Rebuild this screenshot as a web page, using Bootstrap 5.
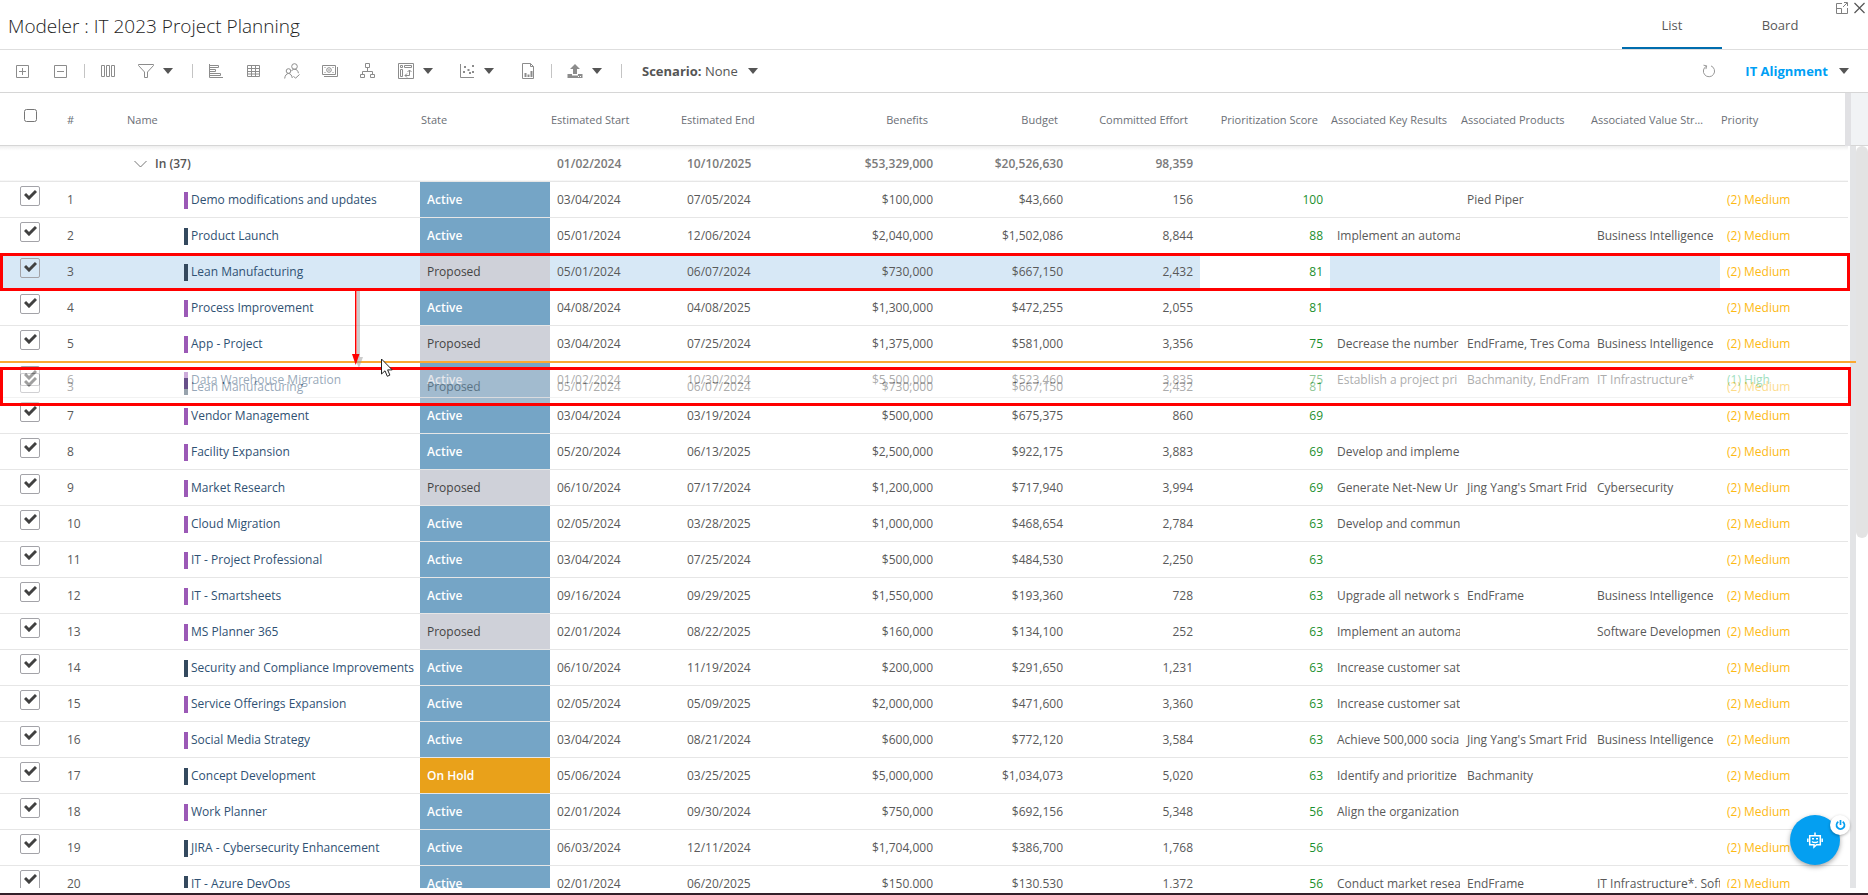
<!DOCTYPE html>
<html lang="en">
<head>
<meta charset="utf-8">
<meta name="viewport" content="width=device-width, initial-scale=1">
<title>Modeler : IT 2023 Project Planning</title>
<link href="https://cdn.jsdelivr.net/npm/bootstrap@5.3.0/dist/css/bootstrap.min.css" rel="stylesheet">
<style>
  body { font-family: "Open Sans", "Noto Sans", sans-serif; font-size: 12px; line-height: 18px; color: #595959; background: #fff; }
  button { border: 0; background: none; padding: 0; color: inherit; }
  svg { display: block; }

  .titlebar { height: 50px; border-bottom: 1px solid #dedede; }
  .page-title { font-size: 19px; line-height: 24px; font-weight: 300; color: #222; padding: 14px 0 0 8px; }
  .view-tabs { --bs-nav-link-color: #595959; --bs-nav-link-hover-color: #222; gap: 16px; padding-right: 46px; }
  .view-tabs .nav-link { width: 100px; padding: 16px 0 13px; text-align: center; font-size: 13px; border-bottom: 2px solid transparent; }
  .view-tabs .nav-link + .nav-link { width: 84px; }
  .view-tabs .nav-link.active { border-bottom-color: #006dae; }
  .window-buttons { top: 2px; right: 3px; gap: 6px; }

  .toolbar { height: 43px; border-bottom: 1px solid #d6d6d6; padding: 0 19px 0 15px; gap: 15px; color: #8c8c8c; }
  .tool-group { display: flex; align-items: center; gap: 22px; }
  .tool-menu { display: flex; align-items: center; gap: 9px; padding-right: 4px; }
  .caret { width: 10px; height: 6px; border: 5px solid transparent; border-top: 6px solid #555; border-bottom: 0; }
  .divider { width: 1px; height: 14px; background: #c4c4c4; }
  .scenario { font-size: 13px; color: #555; padding-left: 5px; gap: 10px; }
  .alignment { font-size: 13px; color: #009ff5; font-weight: 700; padding: 0; gap: 11px; margin-left: 14px; }

  .sheet-table { table-layout: fixed; --bs-table-bg: transparent; --bs-table-color: #595959; margin: 0; }
  .sheet-table > :not(caption) > * > * { padding: 2px 0 0 7px; border-color: #e6e6e6; box-shadow: none; overflow: hidden; white-space: nowrap; height: 36px; vertical-align: middle; }
  .sheet-table > thead > tr > th { height: 52px; padding: 2px 12px 0 1px; font-size: 11px; font-weight: 400; color: #6b6f76; border-color: #d6d6d6; text-overflow: ellipsis; }
  .sheet-table > thead > tr > th:last-child { border-right: 5px solid #e1e1e4; }
  .sheet-table > thead > tr > .num { text-align: right; }
  .sheet-table > thead > tr > .check { padding: 0 0 6px 24px; text-overflow: clip; }
  .sheet-table > thead > tr > .seq { padding-left: 7px; }
  .sheet-table > thead > tr > .name { padding-left: 7px; }
  .sheet-table > tbody > tr > .check { padding: 0 0 6px 20px; }
  .sheet-table > tbody > tr > .name { padding-left: 64px; }
  .sheet-table > tbody > tr > .num { text-align: right; padding-right: 7px; }
  .sheet-table > tbody > .group-row > td { font-weight: 600; color: #7a7a7a; background: linear-gradient(#ececec, #fff 5px); }
  .sheet-table > tbody > .group-row > .group-name { padding-left: 14px; color: #555; }
  .sheet-table > tbody > tr > .score { color: #1c8f2e; }
  .sheet-table > tbody > tr > .medium { color: #fdb913; }
  .sheet-table > tbody > tr > .high { color: #3dbd7c; }
  .sheet-table > tbody > .picked > td { background: #d7e8f6; }
  .sheet-table > tbody > .picked > .score, .sheet-table > tbody > .picked > .medium { background: #fff; }
  .sheet-table > tbody > tr > .st-active { background: #75a5c6; color: #fff; font-weight: 600; }
  .sheet-table > tbody > tr > .st-proposed { background: #cfd1d9; color: #444; }
  .sheet-table > tbody > tr > .st-onhold { background: #e9a11a; color: #fff; font-weight: 600; }
  .name a { color: #2f5173; text-decoration: none; display: flex; align-items: center; gap: 3px; }
  .name a::before { content: ""; flex: none; width: 4px; height: 17px; background: #9b59b6; }
  .name .dark::before { background: #34495e; }

  .row-check { appearance: none; display: block; width: 20px; height: 20px; margin: 0; border: 1px solid #a3a3a8; border-radius: 2px; background: no-repeat 3px 2px/13px 11px url("data:image/svg+xml,%3Csvg xmlns='http://www.w3.org/2000/svg' viewBox='0 0 13 11'%3E%3Cpath d='M1 5l4 4L12 2' fill='none' stroke='%23414141' stroke-width='3'/%3E%3C/svg%3E"); }
  .all-check { display: block; width: 13px; height: 13px; margin: 0; }

  .side { width: 18px; }
  .side-head { height: 53px; background: #f1f3f5; border-left: 1px solid #e1e1e4; border-bottom: 1px solid #d6d6d6; }
  .side-edge { width: 6px; background: #e3e4e6; }
  .side-thumb { width: 12px; height: 392px; border-radius: 6px; background: #e3e3e3; }

  .drag-row { top: 275px; left: 0; right: 18px; opacity: .5; background: #fff; }
  .drop-line { top: 268px; left: 0; right: 12px; height: 2px; background: #fba831; }
  .frame { left: 0; right: 18px; border: 3px solid #f00; }
  .frame-from { top: 160px; height: 38px; }
  .frame-to { top: 274px; right: 17px; height: 39px; }
  .arrow { top: 198px; left: 346px; }
  .pointer { top: 265px; left: 380px; }
  .chat { right: 28px; bottom: 30px; }
  .chat-button { width: 50px; height: 50px; border-radius: 50%; background: #049ff1; color: #fff; box-shadow: 0 2px 5px rgba(0,0,0,.35); }
  .chat-power { top: 0; right: -10px; width: 20px; height: 20px; border-radius: 50%; background: #fff; color: #049ff1; box-shadow: 0 1px 3px rgba(0,0,0,.3); }
  .page-foot { height: 7px; border-bottom: 2px solid #33202a; }
</style>
</head>
<body class="vh-100 d-flex flex-column overflow-hidden">

<header class="titlebar flex-shrink-0 d-flex justify-content-between position-relative">
  <h1 class="page-title m-0">Modeler : IT 2023 Project Planning</h1>
  <nav class="nav view-tabs">
    <a class="nav-link active" href="#list">List</a>
    <a class="nav-link" href="#board">Board</a>
  </nav>
  <div class="window-buttons position-absolute d-flex">
    <button type="button" aria-label="Expand"><svg width="12" height="12" viewBox="0 0 12 12" fill="none" stroke="#808080"><path d="M6 1.500H.5v10h11V6M.5 6.500h5v5M7 5l4-4M8 .5h3.500V4"/></svg></button>
    <button type="button" aria-label="Close"><svg width="11" height="12" viewBox="0 0 11 12" fill="none" stroke="#555" stroke-width="1.200"><path d="M.5 1l10 10M10.500 1l-10 10"/></svg></button>
  </div>
</header>

<div class="toolbar flex-shrink-0 d-flex align-items-center">
  <div class="tool-group">
    <button type="button" aria-label="Expand all"><svg width="16" height="16" viewBox="0 0 16 16" fill="none" stroke="currentColor"><path d="M1.500 2.500h12v12h-12zM4 8.500h7M7.500 5v7"/></svg></button>
    <button type="button" aria-label="Collapse all"><svg width="16" height="16" viewBox="0 0 16 16" fill="none" stroke="currentColor"><path d="M1.500 2.500h12v12h-12zM4 8.500h7"/></svg></button>
  </div>
  <span class="divider"></span>
  <div class="tool-group">
    <button type="button" aria-label="Columns"><svg width="16" height="16" viewBox="0 0 16 16" fill="none" stroke="currentColor"><path d="M1.500 2.500h3v11h-3zM6.500 2.500h3v11h-3zM11.500 2.500h3v11h-3z"/></svg></button>
    <button type="button" class="tool-menu" aria-label="Filter"><svg width="16" height="16" viewBox="0 0 16 16" fill="none" stroke="currentColor"><path d="M.5 1.500h15v1L9.500 9v5.500h-3V9L.5 2.500z"/></svg><span class="caret"></span></button>
  </div>
  <span class="divider"></span>
  <div class="tool-group">
    <button type="button" aria-label="Gantt"><svg width="16" height="16" viewBox="0 0 16 16" fill="none" stroke="currentColor"><path d="M1.500 1v13.500H15M1.500 2.500h9v2h-9M1.500 6.500h6v2h-6M1.500 10.500h11v2h-11"/></svg></button>
    <button type="button" aria-label="Table"><svg width="16" height="16" viewBox="0 0 16 16" fill="none" stroke="currentColor"><path d="M1.500 2.500h12v11h-12zM1.500 5.500h12M1.500 8.500h12M1.500 11h12M5.500 2.500v11M9.500 2.500v11"/></svg></button>
    <button type="button" aria-label="Resources"><svg width="16" height="16" viewBox="0 0 16 16" fill="none" stroke="currentColor"><circle cx="10.500" cy="3.500" r="2.800"/><circle cx="4.500" cy="8" r="2.300"/><path d="M.7 15.500c.3-3 1.800-5 3.800-5s3.300 1.800 3.800 4.500M7.500 8c.7-1.200 1.700-1.800 3-1.800 2.300 0 3.600 1.700 3.900 4M9.500 13.200l2 2 4-3.700"/></svg></button>
    <button type="button" aria-label="Finances"><svg width="16" height="16" viewBox="0 0 16 16" fill="none" stroke="currentColor"><path d="M.5 2.500h13v9H.5zM15.500 4v9.500H2M2.500 4.500h1M10.500 4.500h1M2.500 9.500h1M10.500 9.500h1"/><circle cx="7" cy="7" r="2.300"/><path d="M7 6v2"/></svg></button>
    <button type="button" aria-label="Hierarchy"><svg width="16" height="16" viewBox="0 0 16 16" fill="none" stroke="currentColor"><path d="M5.500.5h4v4h-4zM.5 11.500h4v3h-4zM10.500 11.500h4v3h-4zM7.500 4.500v4M2.500 11.500v-3h10v3"/></svg></button>
    <button type="button" class="tool-menu" aria-label="Pivot"><svg width="16" height="16" viewBox="0 0 16 16" fill="none" stroke="currentColor"><path d="M.5.500h15v15H.5zM2.500 2.500h2v2h-2zM6.500 2.500h7v2h-7zM2.500 6.500h2v7h-2zM7 12.500h4.500V7M9 10.500l-2 2 2 2M9.500 9l2-2 2 2"/></svg><span class="caret"></span></button>
    <button type="button" class="tool-menu" aria-label="Bubble chart"><svg width="16" height="16" viewBox="0 0 16 16" fill="none" stroke="currentColor"><path d="M1.500 1v13.500H15"/><path d="M4 9h2M5 4h2M8.500 7h2M10 10h2M13 3h2M13 9h2" stroke-width="2"/></svg><span class="caret"></span></button>
    <button type="button" aria-label="Report"><svg width="16" height="16" viewBox="0 0 16 16" fill="none" stroke="currentColor"><path d="M2.500.500h8l3 3v12h-11zM10.500.500v3h3"/><path d="M5.500 10v4M8.500 11.500V14M11.500 8v6" stroke-width="2"/></svg></button>
  </div>
  <span class="divider"></span>
  <button type="button" class="tool-menu" aria-label="Export"><svg width="16" height="16" viewBox="0 0 16 16" fill="currentColor"><path d="M8 1l5 5h-3v5H6V6H3zM.5 11H5v1.500h6V11h4.500v4H.5zM11 13v1h1v-1zm2 0v1h1v-1z"/></svg><span class="caret"></span></button>
  <span class="divider"></span>
  <button type="button" class="tool-menu scenario"><span><b>Scenario:</b> None</span><span class="caret"></span></button>
  <button type="button" class="ms-auto" aria-label="Refresh"><svg width="14" height="16" viewBox="0 0 14 16" fill="none" stroke="#999"><path d="M9 2.900a5.600 5.600 0 1 1-4.500.2M1.500 2.200l3.200.7-.8 3.200"/></svg></button>
  <button type="button" class="tool-menu alignment"><span>IT Alignment</span><span class="caret"></span></button>
</div>

<main class="flex-grow-1 d-flex position-relative overflow-hidden">
  <div class="flex-grow-1 overflow-hidden">
    <table class="table sheet-table w-100" id="sheet">
      <colgroup><col width="60"><col width="60"><col width="300"><col width="130"><col width="130"><col width="130"><col width="130"><col width="130"><col width="130"><col width="130"><col width="130"><col width="130"><col width="130"><col></colgroup>
      <thead>
        <tr>
          <th class="check"><input type="checkbox" class="all-check" aria-label="Select all rows"></th>
          <th class="seq">#</th><th class="name">Name</th><th>State</th><th>Estimated Start</th><th>Estimated End</th>
          <th class="num">Benefits</th><th class="num">Budget</th><th class="num">Committed Effort</th><th class="num">Prioritization Score</th>
          <th>Associated Key Results</th><th>Associated Products</th><th>Associated Value Streams</th><th>Priority</th>
        </tr>
      </thead>
      <tbody>
        <tr class="group-row">
          <td></td><td></td>
          <td class="group-name"><span class="d-flex align-items-center gap-2"><svg width="13" height="8" viewBox="0 0 13 8" fill="none" stroke="#777"><path d="M.5 1l6 6 6-6"/></svg>In (37)</span></td>
          <td></td><td>01/02/2024</td><td>10/10/2025</td><td class="num">$53,329,000</td><td class="num">$20,526,630</td><td class="num">98,359</td><td></td><td></td><td></td><td></td><td></td>
        </tr>
      </tbody>
      <tbody id="projects"></tbody>
    </table>
  </div>
  <div class="side flex-shrink-0 d-flex flex-column">
    <div class="side-head"></div>
    <div class="d-flex flex-grow-1"><div class="side-edge"></div><div class="side-thumb"></div></div>
  </div>

  <div class="drop-line position-absolute"></div>
  <div class="drag-row position-absolute">
    <table class="table sheet-table w-100">
      <colgroup><col width="60"><col width="60"><col width="300"><col width="130"><col width="130"><col width="130"><col width="130"><col width="130"><col width="130"><col width="130"><col width="130"><col width="130"><col width="130"><col></colgroup>
      <tbody id="dragged"></tbody>
    </table>
  </div>
  <div class="frame frame-from position-absolute"></div>
  <div class="frame frame-to position-absolute"></div>
  <svg class="arrow position-absolute" width="24" height="76" viewBox="0 0 24 76"><g fill="#999" opacity=".5"><path d="M11 0h3v66h-3zM8 66h9l-4 11z"/></g><path d="M9 0h1.500v64H9z" fill="#f00"/><path d="M6 63h7.500L9.700 74z" fill="#f00"/></svg>
  <svg class="pointer position-absolute" width="13" height="20" viewBox="0 0 13 20"><path d="M1.500 1v15l3.500-3.200 2.300 5.500 2.600-1.200-2.300-5.200h4.600z" fill="#fff" stroke="#222"/></svg>
</main>
<div class="page-foot flex-shrink-0"></div>

<div class="chat position-absolute">
  <button type="button" class="chat-button d-flex align-items-center justify-content-center" aria-label="Chat"><svg width="16" height="18" viewBox="0 0 16 18" fill="none" stroke="currentColor" stroke-width="1.500"><path d="M8 4V1.500M2.700 4.700h10.600v9H9.500L7 16v-2.300H2.700zM.8 7.500v3.500M15.200 7.500v3.500M5 10.500c1.500 1.400 4.500 1.400 6 0"/><path d="M5 7.800h2M9 7.800h2"/></svg></button>
  <button type="button" class="chat-power position-absolute d-flex align-items-center justify-content-center" aria-label="Turn off chat"><svg width="11" height="12" viewBox="0 0 11 12" fill="none" stroke="currentColor" stroke-width="1.700"><path d="M3.300 2.700a4 4 0 1 0 4.400 0M5.500 1v5"/></svg></button>
</div>

<script>
  // seq, name, bar colour, state, start, end, benefits, budget, effort, score, key results, products, value streams, priority
  const projects = [
    [1, "Demo modifications and updates", "", "Active", "03/04/2024", "07/05/2024", "$100,000", "$43,660", "156", 100, "", "Pied Piper", "", "(2) Medium"],
    [2, "Product Launch", "dark", "Active", "05/01/2024", "12/06/2024", "$2,040,000", "$1,502,086", "8,844", 88, "Implement an automa", "", "Business Intelligence", "(2) Medium"],
    [3, "Lean Manufacturing", "dark", "Proposed", "05/01/2024", "06/07/2024", "$730,000", "$667,150", "2,432", 81, "", "", "", "(2) Medium"],
    [4, "Process Improvement", "", "Active", "04/08/2024", "04/08/2025", "$1,300,000", "$472,255", "2,055", 81, "", "", "", "(2) Medium"],
    [5, "App - Project", "", "Proposed", "03/04/2024", "07/25/2024", "$1,375,000", "$581,000", "3,356", 75, "Decrease the number", "EndFrame, Tres Coma", "Business Intelligence", "(2) Medium"],
    [6, "Data Warehouse Migration", "", "Active", "01/02/2024", "10/30/2024", "$5,500,000", "$523,460", "3,835", 75, "Establish a project pri", "Bachmanity, EndFram", "IT Infrastructure*", "(1) High"],
    [7, "Vendor Management", "", "Active", "03/04/2024", "03/19/2024", "$500,000", "$675,375", "860", 69, "", "", "", "(2) Medium"],
    [8, "Facility Expansion", "", "Active", "05/20/2024", "06/13/2025", "$2,500,000", "$922,175", "3,883", 69, "Develop and impleme", "", "", "(2) Medium"],
    [9, "Market Research", "", "Proposed", "06/10/2024", "07/17/2024", "$1,200,000", "$717,940", "3,994", 69, "Generate Net-New Ur", "Jing Yang's Smart Frid", "Cybersecurity", "(2) Medium"],
    [10, "Cloud Migration", "", "Active", "02/05/2024", "03/28/2025", "$1,000,000", "$468,654", "2,784", 63, "Develop and commun", "", "", "(2) Medium"],
    [11, "IT - Project Professional", "", "Active", "03/04/2024", "07/25/2024", "$500,000", "$484,530", "2,250", 63, "", "", "", "(2) Medium"],
    [12, "IT - Smartsheets", "", "Active", "09/16/2024", "09/29/2025", "$1,550,000", "$193,360", "728", 63, "Upgrade all network s", "EndFrame", "Business Intelligence", "(2) Medium"],
    [13, "MS Planner 365", "", "Proposed", "02/01/2024", "08/22/2025", "$160,000", "$134,100", "252", 63, "Implement an automa", "", "Software Developmen", "(2) Medium"],
    [14, "Security and Compliance Improvements", "dark", "Active", "06/10/2024", "11/19/2024", "$200,000", "$291,650", "1,231", 63, "Increase customer sat", "", "", "(2) Medium"],
    [15, "Service Offerings Expansion", "", "Active", "02/05/2024", "05/09/2025", "$2,000,000", "$471,600", "3,360", 63, "Increase customer sat", "", "", "(2) Medium"],
    [16, "Social Media Strategy", "", "Active", "03/04/2024", "08/21/2024", "$600,000", "$772,120", "3,584", 63, "Achieve 500,000 socia", "Jing Yang's Smart Frid", "Business Intelligence", "(2) Medium"],
    [17, "Concept Development", "dark", "On Hold", "05/06/2024", "03/25/2025", "$5,000,000", "$1,034,073", "5,020", 63, "Identify and prioritize", "Bachmanity", "", "(2) Medium"],
    [18, "Work Planner", "", "Active", "02/01/2024", "09/30/2024", "$750,000", "$692,156", "5,348", 56, "Align the organization", "", "", "(2) Medium"],
    [19, "JIRA - Cybersecurity Enhancement", "dark", "Active", "06/03/2024", "12/11/2024", "$1,704,000", "$386,700", "1,768", 56, "", "", "", "(2) Medium"],
    [20, "IT - Azure DevOps", "dark", "Active", "02/01/2024", "06/20/2025", "$150,000", "$130,530", "1,372", 56, "Conduct market resea", "EndFrame", "IT Infrastructure*, Soft", "(2) Medium"]
  ];

  const row = ([seq, name, bar, state, start, end, benefits, budget, effort, score, results, products, streams, priority], picked) => `
    <tr class="${picked ? "picked" : ""}">
      <td class="check"><input type="checkbox" class="row-check" checked aria-label="Select ${name}"></td>
      <td>${seq}</td>
      <td class="name"><a class="${bar}" href="#project-${seq}">${name}</a></td>
      <td class="st-${state.replace(" ", "").toLowerCase()}">${state}</td>
      <td>${start}</td><td>${end}</td>
      <td class="num">${benefits}</td><td class="num">${budget}</td><td class="num">${effort}</td>
      <td class="num score">${score}</td>
      <td>${results}</td><td>${products}</td><td>${streams}</td>
      <td class="${priority.slice(4).toLowerCase()}">${priority}</td>
    </tr>`;

  document.getElementById("projects").innerHTML = projects.map(p => row(p, p[0] === 3)).join("");
  document.getElementById("dragged").innerHTML = row(projects[2], false);
</script>
<script src="https://cdn.jsdelivr.net/npm/bootstrap@5.3.0/dist/js/bootstrap.bundle.min.js"></script>
</body>
</html>
